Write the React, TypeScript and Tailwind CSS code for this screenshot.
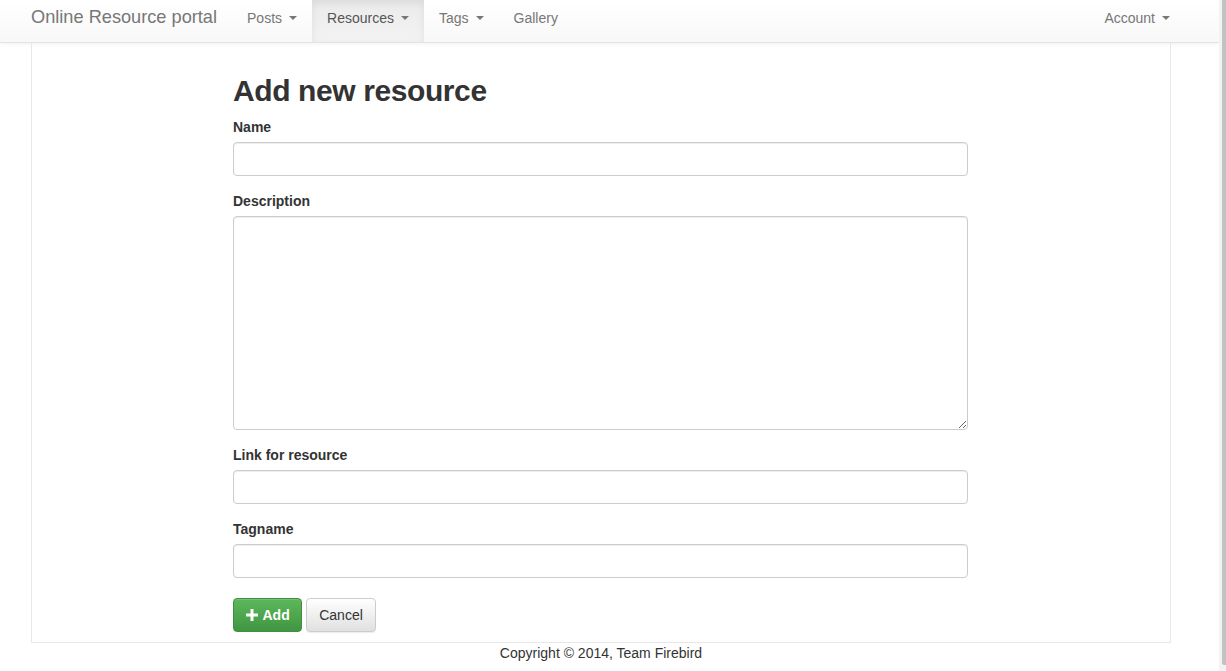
import { useState } from "react";

type NavItem = { label: string; caret?: boolean; active?: boolean };

const navItems: NavItem[] = [
  { label: "Posts", caret: true },
  { label: "Resources", caret: true, active: true },
  { label: "Tags", caret: true },
  { label: "Gallery" },
];

function Caret() {
  return (
    <span className="ml-[7px] inline-block h-0 w-0 border-x-[4px] border-t-[4px] border-x-transparent border-t-[#777] align-middle" />
  );
}

function Field({ label, children }: { label: string; children: React.ReactNode }) {
  return (
    <div className="mb-[15px] flex flex-col">
      <label className="mb-[5px] text-[14px] leading-[20px] font-bold text-[#333]">{label}</label>
      {children}
    </div>
  );
}

const inputCls =
  "h-[34px] w-full rounded-[4px] border border-[#ccc] bg-white px-3 text-[14px] text-[#555] shadow-[inset_0_1px_1px_rgba(0,0,0,0.075)] outline-none";

export default function App() {
  const [form, setForm] = useState({ name: "", description: "", link: "", tag: "" });

  return (
    <div
      className="flex min-h-[671px] w-full bg-white text-[14px] text-[#333]"
      style={{ fontFamily: '"Liberation Sans", Arial, sans-serif' }}
    >
      <div className="flex min-w-0 flex-1 flex-col">
        {/* navbar */}
        <nav className="flex h-[43px] items-stretch border-b border-[#e3e3e3] bg-gradient-to-b from-white to-[#f8f8f8] shadow-[0_1px_4px_rgba(0,0,0,0.06)]">
          <a className="flex items-center pr-[15px] pb-[6px] pl-[31px] text-[18.2px] text-[#777]">Online Resource portal</a>
          <ul className="flex items-stretch">
            {navItems.map((item) => (
              <li
                key={item.label}
                className={
                  item.active
                    ? "flex items-center bg-gradient-to-b from-[#ebebeb] to-[#f3f3f3] px-[15px] pb-[6px] text-[#555] shadow-[inset_0_3px_9px_rgba(0,0,0,0.075)]"
                    : "flex items-center px-[15px] pb-[6px] text-[#777]"
                }
              >
                {item.label}
                {item.caret && <Caret />}
              </li>
            ))}
          </ul>
          <div className="ml-auto flex items-center pr-[49px] pb-[6px] text-[#777]">
            Account
            <Caret />
          </div>
        </nav>

        {/* main box */}
        <main className="ml-[31px] w-[1140px] border-x border-b border-[#e8e8e8] pt-[31px] pb-[10px]">
          <div className="ml-[201px] w-[735px]">
            <h2 className="mb-[10px] text-[30px] leading-[33px] font-bold tracking-[-0.4px] text-[#333]">Add new resource</h2>
            <Field label="Name">
              <input className={inputCls} value={form.name} onChange={(e) => setForm({ ...form, name: e.target.value })} />
            </Field>
            <Field label="Description">
              <textarea
                className="block h-[214px] w-full rounded-[4px] border border-[#ccc] bg-white px-3 py-[6px] text-[14px] text-[#555] shadow-[inset_0_1px_1px_rgba(0,0,0,0.075)] outline-none"
                value={form.description}
                onChange={(e) => setForm({ ...form, description: e.target.value })}
              />
            </Field>
            <Field label="Link for resource">
              <input className={inputCls} value={form.link} onChange={(e) => setForm({ ...form, link: e.target.value })} />
            </Field>
            <Field label="Tagname">
              <input className={inputCls} value={form.tag} onChange={(e) => setForm({ ...form, tag: e.target.value })} />
            </Field>
            <div className="mt-[20px] flex gap-[4px]">
              <button className="flex h-[34px] items-center gap-[5px] rounded-[4px] border border-[#3e8f3e] bg-gradient-to-b from-[#5cb85c] to-[#419641] px-[11.5px] text-[14px] font-bold text-white shadow-[inset_0_1px_0_rgba(255,255,255,0.15)]">
                <svg width="12" height="12" viewBox="0 0 12 12" fill="white">
                  <rect x="4.5" y="0" width="3" height="12" />
                  <rect x="0" y="4.5" width="12" height="3" />
                </svg>
                Add
              </button>
              <button className="h-[34px] rounded-[4px] border border-[#ccc] bg-gradient-to-b from-white to-[#e0e0e0] px-[12px] text-[14px] text-[#333] shadow-[0_1px_1px_rgba(0,0,0,0.075)]">
                Cancel
              </button>
            </div>
          </div>
        </main>

        <footer className="ml-[31px] w-[1140px] text-center leading-[20px] text-[#333]">
          Copyright © 2014, Team Firebird
        </footer>
      </div>

      {/* scrollbar strip */}
      <div className="flex w-[7px] shrink-0 bg-[#f3f3f3]">
        <div className="ml-[3px] mb-[6px] w-[4px] rounded-bl-[2px] bg-[#c2c2c2]" />
      </div>
    </div>
  );
}
